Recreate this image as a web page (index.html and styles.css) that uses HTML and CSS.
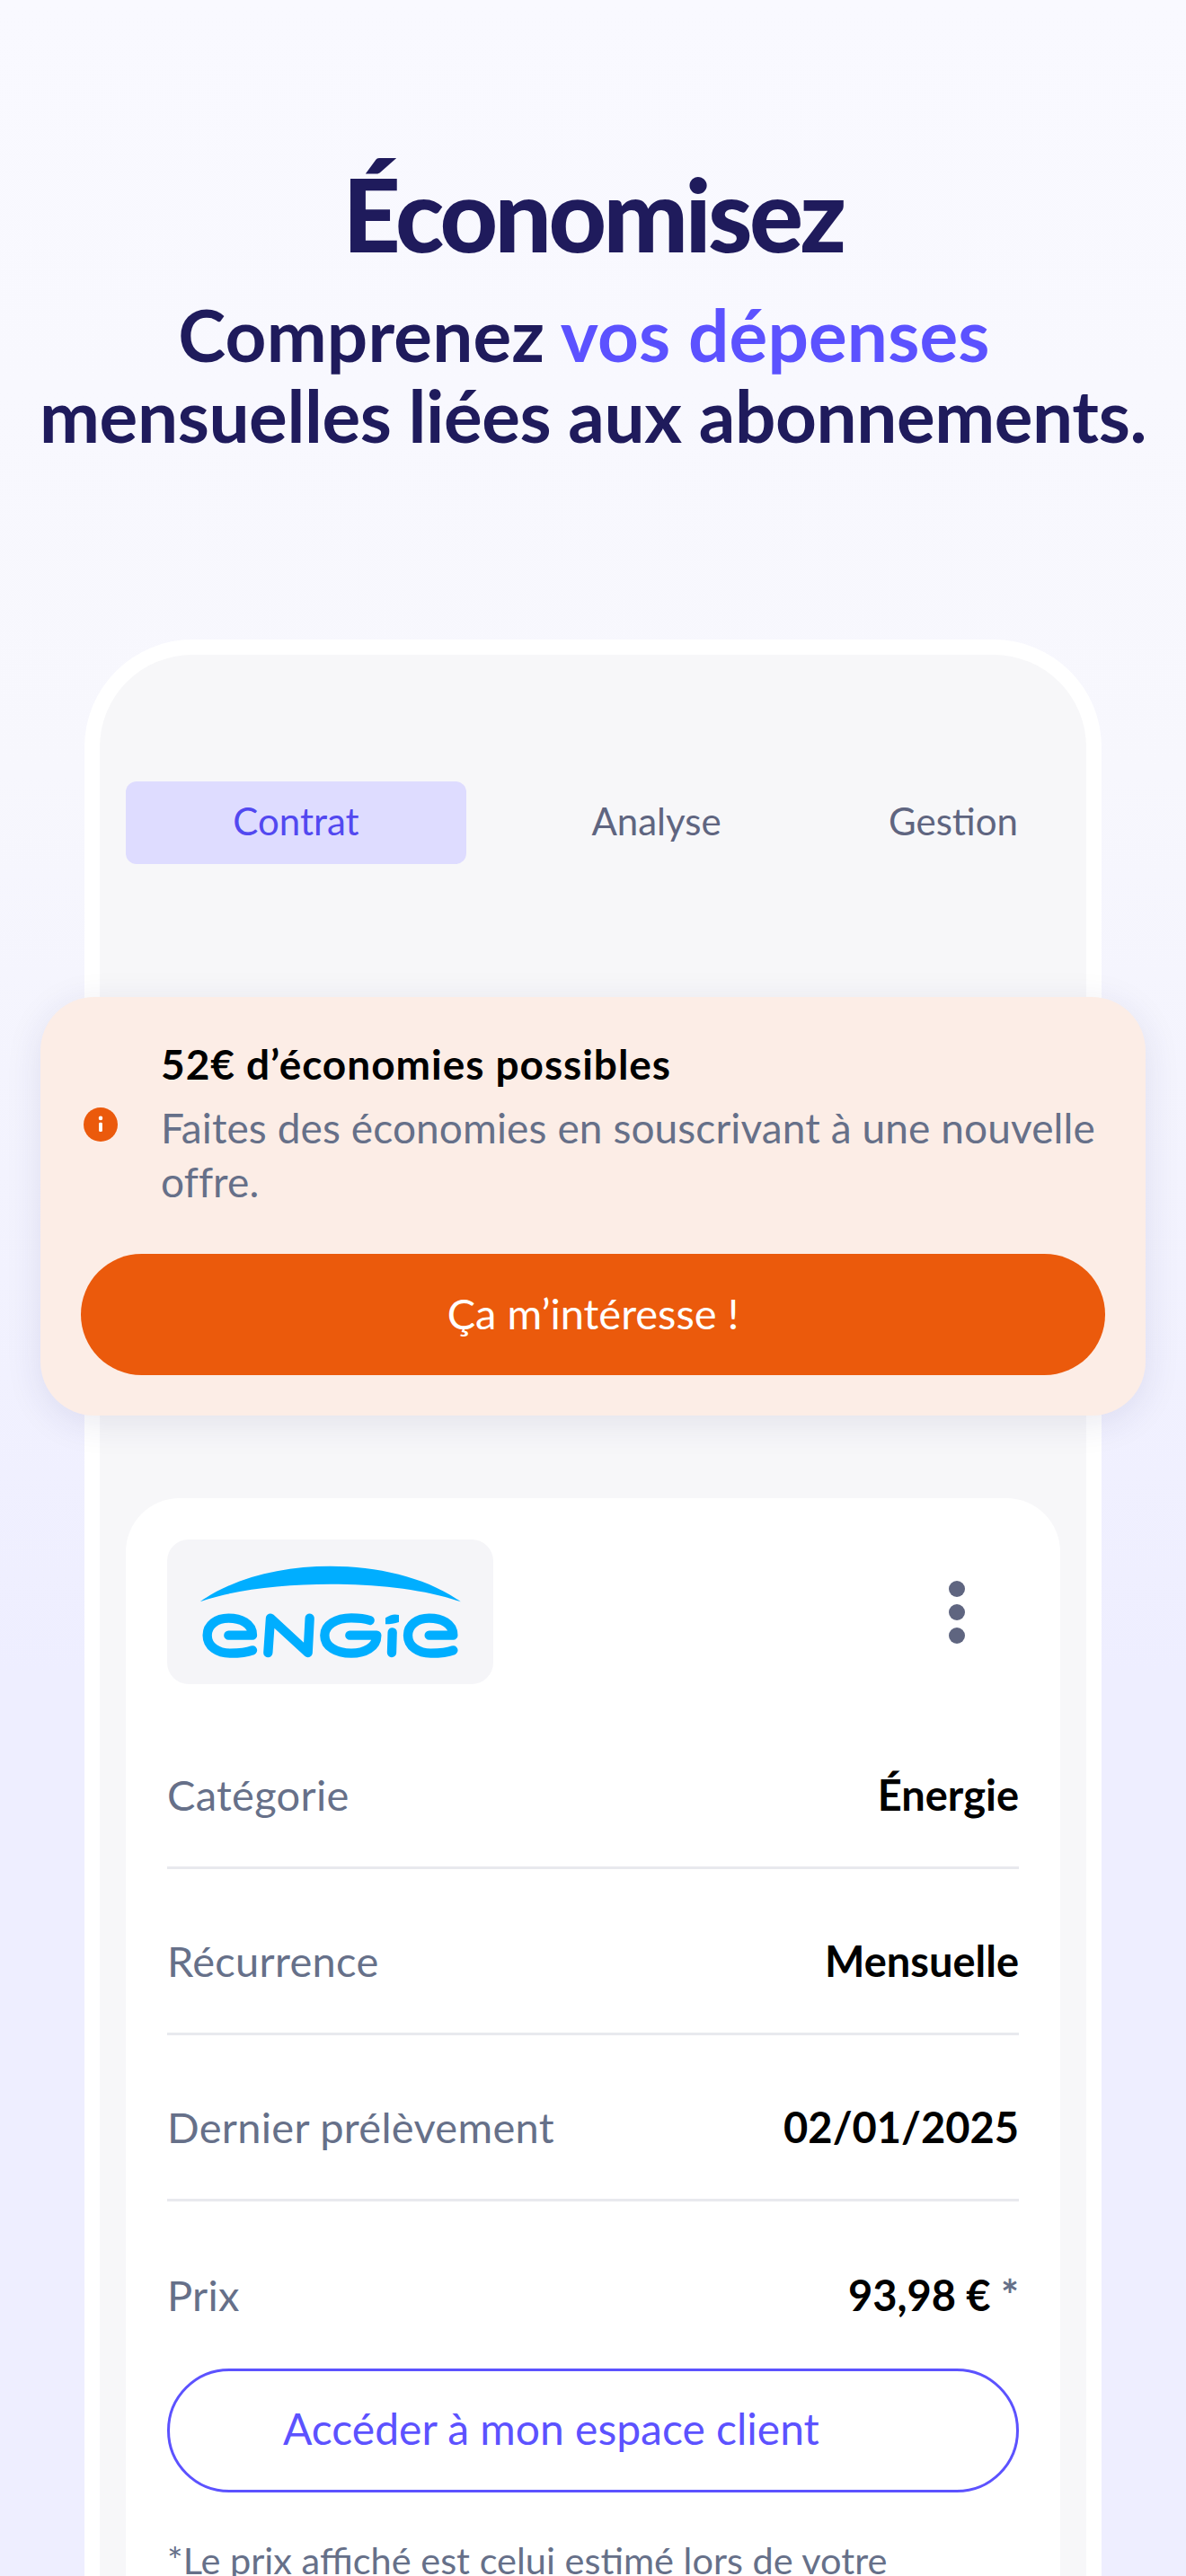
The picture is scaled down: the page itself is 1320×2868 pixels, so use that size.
FILE: index.html
```html
<html>
<head>
    <meta charset="utf-8">
    <link rel="stylesheet" href="styles.css">
</head>
<body>
    <div class="page">
        <h1 class="title">Économisez</h1>
        <p class="subtitle"><span class="line-one">Comprenez <span class="accent">vos dépenses</span></span><br>mensuelles liées aux abonnements.</p>
        <div class="phone">
            <div class="tabs">
                <div class="tab tab-contrat active">Contrat</div>
                <div class="tab tab-analyse">Analyse</div>
                <div class="tab tab-gestion">Gestion</div>
            </div>
            <div class="banner">
                <div class="banner-top">
                    <svg class="info" viewBox="0 0 40 40">
                        <circle cx="20" cy="20" r="20" fill="#EB5A0C"/>
                        <circle cx="20" cy="12.5" r="2.4" fill="#fff"/>
                        <rect x="18" y="17.5" width="4" height="11" rx="1.5" fill="#fff"/>
                    </svg>
                    <div class="banner-text">
                        <div class="banner-title">52€ d’économies possibles</div>
                        <div class="banner-desc">Faites des économies en souscrivant à une nouvelle offre.</div>
                    </div>
                </div>
                <div class="banner-btn">Ça m’intéresse !</div>
            </div>
            <div class="card">
                <div class="card-head">
                    <div class="logo">
                        <svg viewBox="0 0 1089 483" width="363" height="161">
                            <path d="M110 208 C330 50 760 50 980 208 C760 130 330 130 110 208 Z" fill="#00AEFF"/>
                            <g fill="none" stroke="#00AEFF" stroke-width="31" stroke-linecap="round" stroke-linejoin="round">
                                <path d="M205 320 H285 C285 280 245 263 205 263 C165 263 134 285 134 320 C134 358 170 380 210 380 C240 380 265 378 285 370"/>
                                <path d="M337 378 L345 263 L470 378 L476 263"/>
                                <path d="M610 320 H700 C700 360 660 380 615 380 C565 380 526 358 526 320 C526 285 565 262 615 262 C640 262 660 264 677 270"/>
                                <path d="M752 310 L750 378"/>
                                <path d="M875 320 H955 C955 280 915 263 875 263 C835 263 804 285 804 320 C804 358 840 380 880 380 C910 380 935 378 955 370"/>
                            </g>
                            <path d="M729 262 C745 250 760 248 774 252 V276 C760 280 745 283 729 283 Z" fill="#00AEFF"/>
                        </svg>
                    </div>
                    <div class="kebab"><span></span><span></span><span></span></div>
                </div>
                <div class="row first"><span class="label">Catégorie</span><span class="value">Énergie</span></div>
                <div class="row"><span class="label">Récurrence</span><span class="value">Mensuelle</span></div>
                <div class="row"><span class="label">Dernier prélèvement</span><span class="value">02/01/2025</span></div>
                <div class="row last"><span class="label">Prix</span><span class="value">93,98 € <span class="star">*</span></span></div>
                <div class="client-btn">Accéder à mon espace client</div>
                <p class="note">*Le prix affiché est celui estimé lors de votre</p>
            </div>
        </div>
    </div>
</body>
</html>
```
FILE: styles.css
```css
html, body {
    margin: 0;
    height: 100%;
}
body {
    font-family: "Lato", "Noto Sans", sans-serif;
    overflow: hidden;
}
.page {
    height: 2868px;
    overflow: hidden;
    background: linear-gradient(180deg, #F9F9FF 0%, #F7F7FD 30%, #EEEEFF 65%);
    text-align: center;
}
.title {
    margin: 0;
    padding-top: 168px;
    font-size: 112px;
    line-height: 140px;
    font-weight: 900;
    letter-spacing: -3.6px;
    color: #1F1B5C;
}
.subtitle {
    margin: 19px 0 0;
    font-size: 80px;
    line-height: 90px;
    font-weight: 700;
    letter-spacing: -0.4px;
    color: #1F1B5C;
}
.line-one {
    letter-spacing: 0.15px;
}
.accent {
    color: #5C52FF;
    padding-right: 20px;
}
.phone {
    margin: 205px 94px 0;
    height: 2400px;
    padding: 141px 29px 0;
    background: #F7F7F9;
    border: 17px solid #fff;
    border-bottom: 0;
    border-radius: 120px 120px 0 0;
    text-align: left;
}
.tabs {
    display: flex;
    height: 92px;
}
.tab {
    display: flex;
    align-items: center;
    justify-content: center;
    box-sizing: border-box;
    padding-bottom: 4px;
    font-size: 42px;
    color: #5F6580;
    border-radius: 12px;
}
.tab-contrat { width: 379px; }
.tab-analyse { width: 423px; }
.tab-gestion { width: 238px; }
.tab.active {
    background: #DEDCFF;
    color: #5248F0;
}
.banner {
    position: relative;
    margin: 148px -95px 0;
    height: 466px;
    box-sizing: border-box;
    padding: 47px 45px 45px;
    background: #FCEDE6;
    border-radius: 60px;
    box-shadow: 0 8px 40px rgba(40, 40, 110, 0.1);
}
.banner-top {
    display: flex;
    align-items: center;
    height: 190px;
}
.info {
    width: 38px;
    height: 38px;
    margin-left: 3px;
    flex: none;
}
.banner-text {
    margin-left: 48px;
}
.banner-title {
    font-size: 46px;
    line-height: 54px;
    font-weight: 700;
    letter-spacing: 0.95px;
    color: #000;
}
.banner-desc {
    margin-top: 14px;
    font-size: 46px;
    line-height: 60px;
    letter-spacing: 0.1px;
    color: #667089;
}
.banner-btn {
    margin-top: 49px;
    height: 135px;
    line-height: 132px;
    border-radius: 68px;
    background: #EB5A0C;
    color: #fff;
    text-align: center;
    font-size: 47px;
}
.card {
    margin-top: 92px;
    padding: 46px 46px 0;
    background: #fff;
    border-radius: 60px 60px 0 0;
    height: 1400px;
}
.card-head {
    display: flex;
    justify-content: space-between;
    align-items: center;
}
.logo {
    width: 363px;
    height: 161px;
    border-radius: 24px;
    background: #F5F5F8;
}
.logo svg {
    display: block;
}
.kebab {
    display: flex;
    flex-direction: column;
    gap: 8px;
    margin-right: 60px;
}
.kebab span {
    display: block;
    width: 18px;
    height: 18px;
    border-radius: 50%;
    background: #5F6580;
}
.row {
    display: flex;
    justify-content: space-between;
    align-items: center;
    box-sizing: border-box;
    height: 185px;
    padding-top: 22px;
    border-bottom: 3px solid #E8E9EE;
    font-size: 47px;
}
.row.first {
    margin-top: 21px;
}
.row.last {
    border-bottom: 0;
}
.label {
    letter-spacing: 0.3px;
    color: #667089;
}
.value {
    font-weight: 700;
    color: #000;
}
.star {
    color: #667089;
}
.client-btn {
    margin-top: 1px;
    height: 132px;
    line-height: 128px;
    border: 3px solid #5C52FF;
    border-radius: 70px;
    color: #5C52FF;
    font-size: 48px;
    padding-left: 126px;
}
.note {
    margin: 50px 0 0;
    font-size: 41.5px;
    line-height: 50px;
    color: #667089;
}
```
